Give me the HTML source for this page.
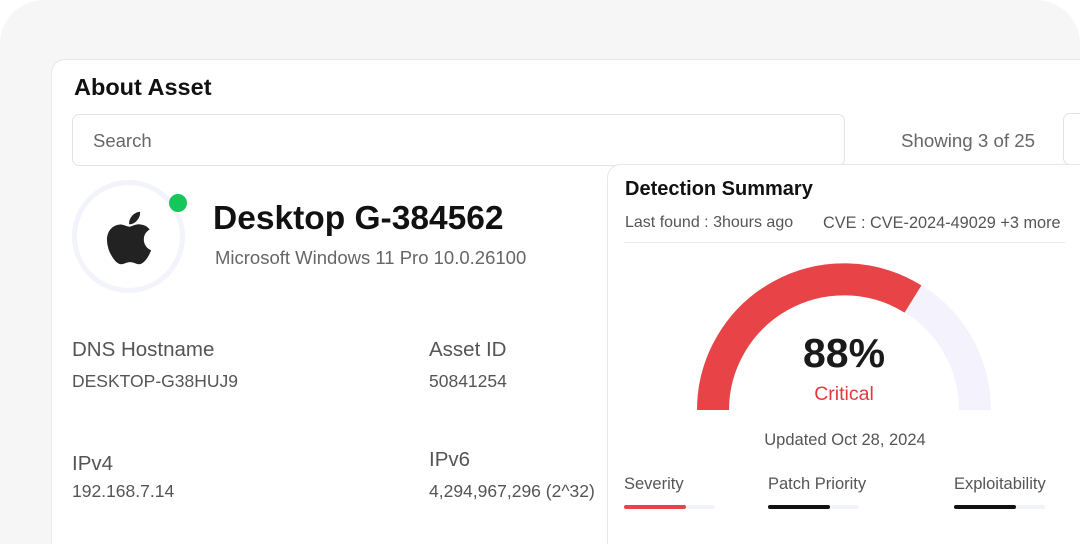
<!DOCTYPE html>
<html style="width:1080px;height:544px;overflow:hidden"><head><style>
*{margin:0;padding:0;box-sizing:border-box}
body{width:1080px;height:544px;overflow:hidden;background:#fff;font-family:"Liberation Sans",sans-serif}
#w{position:relative;width:1080px;height:544px;overflow:hidden}
.bg{position:absolute;left:0;top:0;width:1080px;height:544px;background:#f6f6f6;border-radius:44px 44px 0 0}
.card{position:absolute;left:51px;top:59px;width:1040px;height:500px;background:#fff;border:1.5px solid #e7e7e7;border-radius:14px}
.a{position:absolute;white-space:nowrap}
.lbl{font-size:20.5px;color:#555}
.val{font-size:17.5px;color:#555}
.det{position:absolute;left:607px;top:164px;width:490px;height:400px;background:#fff;border:1.5px solid #e7e7e7;border-radius:14px}
.bar{position:absolute;height:4px;width:91px;background:#f3f3fb;border-radius:2px}
.bar i{display:block;height:4px;border-radius:2px}
</style></head><body><div id="w">
<div class="bg"></div>
<div class="card"></div>
<div class="a" style="left:74px;top:74px;font-size:23.5px;font-weight:bold;color:#111">About Asset</div>
<div class="a" style="left:72px;top:114px;width:773px;height:52px;border:1.5px solid #e3e3e3;border-radius:7px"></div>
<div class="a" style="left:93px;top:130px;font-size:18.5px;color:#666">Search</div>
<div class="a" style="left:901px;top:130px;font-size:18.7px;color:#666">Showing 3 of 25</div>
<div class="a" style="left:1063px;top:113px;width:40px;height:52px;border:1.5px solid #e3e3e3;border-radius:7px"></div>
<div class="a" style="left:72px;top:180px;width:113px;height:113px;border:5px solid #f3f3fb;border-radius:50%"></div>
<div class="a" style="left:169px;top:194px;width:18px;height:18px;background:#13c75a;border-radius:50%"></div>
<svg class="a" style="left:104px;top:208px" width="50" height="60" viewBox="0 0 384 512"><path fill="#222" d="M318.7 268.7c-.2-36.7 16.4-64.4 50-84.8-18.8-26.9-47.2-41.7-84.7-44.6-35.5-2.8-74.3 20.7-88.5 20.7-15 0-49.400-19.700-76.400-19.700C63.300 141.200 4 184.800 4 273.500q0 39.300 14.400 81.200c12.800 36.700 59 126.700 107.200 125.200 25.200-.6 43-17.900 75.800-17.900 31.800 0 48.300 17.900 76.400 17.900 48.600-.7 90.400-82.500 102.600-119.300-65.200-30.700-61.700-90-61.700-91.900zm-56.600-164.200c27.300-32.400 24.800-61.900 24-72.500-24.100 1.400-52 16.400-67.900 34.900-17.500 19.800-27.800 44.300-25.600 71.900 26.100 2 49.900-11.400 69.500-34.300z"/></svg>
<div class="a" style="left:213px;top:200px;font-size:33.5px;font-weight:bold;color:#111">Desktop G-384562</div>
<div class="a" style="left:215px;top:247px;font-size:18.5px;color:#666">Microsoft Windows 11 Pro 10.0.26100</div>
<div class="a lbl" style="left:72px;top:338px">DNS Hostname</div>
<div class="a val" style="left:72px;top:371px">DESKTOP-G38HUJ9</div>
<div class="a lbl" style="left:429px;top:338px">Asset ID</div>
<div class="a val" style="left:429px;top:371px">50841254</div>
<div class="a lbl" style="left:72px;top:452px">IPv4</div>
<div class="a val" style="left:72px;top:481px">192.168.7.14</div>
<div class="a lbl" style="left:429px;top:448px">IPv6</div>
<div class="a val" style="left:429px;top:481px">4,294,967,296 (2^32)</div>
<div class="det"></div>
<div class="a" style="left:625px;top:178px;font-size:20px;font-weight:bold;color:#111">Detection Summary</div>
<div class="a" style="left:625px;top:214px;font-size:16px;color:#555">Last found : 3hours ago</div>
<div class="a" style="left:823px;top:214px;font-size:16.3px;color:#555">CVE : CVE-2024-49029 +3 more</div>
<div class="a" style="left:624px;top:242px;width:441px;height:1px;background:#e8e8e8"></div>
<svg class="a" style="left:0;top:0" width="1080" height="544">
<path d="M713 410 A131 131 0 0 1 975 410" fill="none" stroke="#f4f3fd" stroke-width="32"/>
<path d="M713 410 A131 131 0 0 1 913 299" fill="none" stroke="#e84346" stroke-width="32"/>
</svg>
<div class="a" style="left:744px;top:330px;width:200px;text-align:center;font-size:41px;font-weight:bold;color:#1a1a1a">88%</div>
<div class="a" style="left:744px;top:383px;width:200px;text-align:center;font-size:19.5px;color:#e23a3d">Critical</div>
<div class="a" style="left:695px;top:431px;width:300px;text-align:center;font-size:16.5px;color:#555">Updated Oct 28, 2024</div>
<div class="a" style="left:624px;top:475px;font-size:16.5px;color:#555">Severity</div>
<div class="a" style="left:768px;top:475px;font-size:16.5px;color:#555">Patch Priority</div>
<div class="a" style="left:954px;top:475px;font-size:16.5px;color:#555">Exploitability</div>
<div class="bar" style="left:624px;top:505px"><i style="width:62px;background:#e84346"></i></div>
<div class="bar" style="left:768px;top:505px"><i style="width:62px;background:#111"></i></div>
<div class="bar" style="left:954px;top:505px"><i style="width:62px;background:#111"></i></div>
</div></body></html>
